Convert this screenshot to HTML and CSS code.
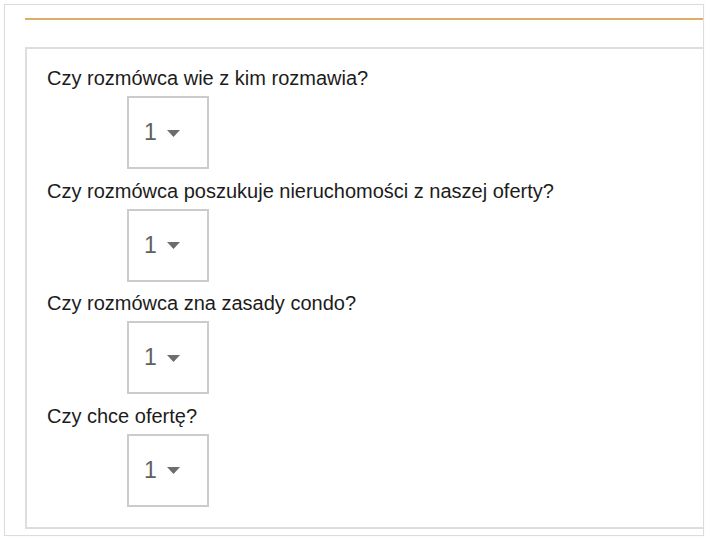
FILE: index.html
```html
<!DOCTYPE html>
<html lang="pl">
<head>
<meta charset="utf-8">
<title>Ankieta</title>
<link rel="stylesheet" href="styles.css">
</head>
<body>
<div class="panel">
  <div class="rule"></div>
  <div class="inner">
    <div class="question">
      <div class="label">Czy rozmówca wie z kim rozmawia?</div>
      <div class="select"><span class="value">1</span><svg class="arrow" width="13" height="7" viewBox="0 0 13 7"><polygon points="0,0 13,0 6.5,7" fill="#6d6d6d"/></svg></div>
    </div>
    <div class="question">
      <div class="label">Czy rozmówca poszukuje nieruchomości z naszej oferty?</div>
      <div class="select"><span class="value">1</span><svg class="arrow" width="13" height="7" viewBox="0 0 13 7"><polygon points="0,0 13,0 6.5,7" fill="#6d6d6d"/></svg></div>
    </div>
    <div class="question">
      <div class="label">Czy rozmówca zna zasady condo?</div>
      <div class="select"><span class="value">1</span><svg class="arrow" width="13" height="7" viewBox="0 0 13 7"><polygon points="0,0 13,0 6.5,7" fill="#6d6d6d"/></svg></div>
    </div>
    <div class="question">
      <div class="label">Czy chce ofertę?</div>
      <div class="select"><span class="value">1</span><svg class="arrow" width="13" height="7" viewBox="0 0 13 7"><polygon points="0,0 13,0 6.5,7" fill="#6d6d6d"/></svg></div>
    </div>
  </div>
</div>
</body>
</html>
```
FILE: styles.css
```css
html, body {
  margin: 0;
  padding: 0;
  background: #ffffff;
}
body {
  padding: 4px;
  font-family: "Liberation Sans", Arial, sans-serif;
}
.panel {
  width: 678px;
  border: 1px solid #dcdcdc;
  box-shadow: 0 0 1px rgba(0,0,0,0.08);
  padding: 13px 0 6px 20px;
}
.rule {
  height: 2px;
  background: #dcae6a;
}
.inner {
  margin-top: 27px;
  border: 2px solid #dddddd;
  border-right: none;
  padding: 17px 0 20px 20px;
}
.question {
  display: flex;
  flex-direction: column;
  align-items: flex-start;
}
.label {
  font-size: 20px;
  line-height: 24px;
  color: #1c1c1c;
}
.select {
  box-sizing: border-box;
  margin: 6px 0 9.5px 80px;
  width: 82px;
  height: 73px;
  border: 2px solid #cccccc;
  display: flex;
  align-items: center;
  padding-left: 15px;
}
.question:last-child .select {
  margin-bottom: 0;
}
.value {
  font-size: 23px;
  color: #606060;
  line-height: 1;
}
.arrow {
  margin-left: 10px;
  margin-top: 1px;
}
```
